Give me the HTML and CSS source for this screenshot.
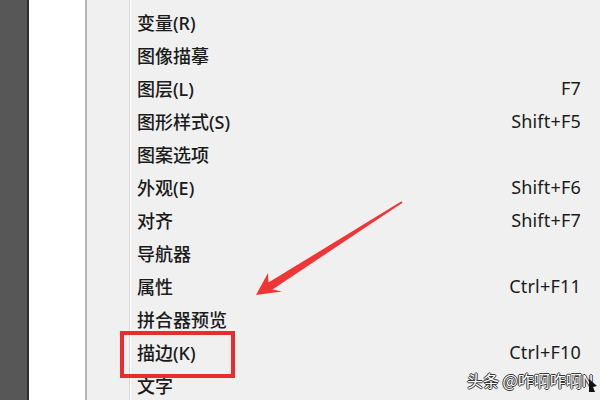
FILE: index.html
```
<!DOCTYPE html>
<html lang="zh-CN">

<head>
    <meta charset="UTF-8">
    <meta name="viewport" content="width=device-width, initial-scale=1.0">
    <title>窗口菜单</title>
    <link rel="stylesheet" href="styles.css">
</head>

<body>
    <div class="screen">
        <!-- Left tool strip and document edge -->
        <div class="tool-strip"></div>
        <div class="doc-edge"></div>

        <!-- Dropdown menu -->
        <div class="menu">
            <div class="gutter"></div>
            <ul class="menu-list">
                <li class="menu-item"><span>变量(R)</span><span class="key"></span></li>
                <li class="menu-item"><span>图像描摹</span><span class="key"></span></li>
                <li class="menu-item"><span>图层(L)</span><span class="key">F7</span></li>
                <li class="menu-item"><span>图形样式(S)</span><span class="key">Shift+F5</span></li>
                <li class="menu-item"><span>图案选项</span><span class="key"></span></li>
                <li class="menu-item"><span>外观(E)</span><span class="key">Shift+F6</span></li>
                <li class="menu-item"><span>对齐</span><span class="key">Shift+F7</span></li>
                <li class="menu-item"><span>导航器</span><span class="key"></span></li>
                <li class="menu-item"><span>属性</span><span class="key">Ctrl+F11</span></li>
                <li class="menu-item"><span>拼合器预览</span><span class="key"></span></li>
                <li class="menu-item"><span>描边(K)</span><span class="key">Ctrl+F10</span></li>
                <li class="menu-item"><span>文字</span><span class="key"></span></li>
            </ul>
        </div>

        <!-- Annotations drawn over the screenshot -->
        <div class="highlight-box"></div>
        <svg class="pointer-arrow" width="600" height="400" viewBox="0 0 600 400">
            <polygon points="256,295 268,273 268.5,282.5 401.5,201.3 402.5,202.7 272.5,289.5 282,291.5" fill="#ef3535" />
        </svg>

        <div class="watermark">头条 @咋啊咋啊N</div>
        <svg class="cursor" width="10" height="16" viewBox="0 0 10 16">
            <polygon points="1,1 9,8 5,9 7,14 1,14" fill="#111" />
        </svg>
    </div>
</body>

</html>
```

FILE: styles.css
```
/* Page frame */
body, html {
    margin: 0;
    padding: 0;
    width: 600px;
    height: 400px;
    overflow: hidden;
}

body {
    font-family: 'Noto Sans', 'Noto Sans CJK SC', sans-serif;
}

.screen {
    position: relative;
    display: flex;
    width: 600px;
    height: 400px;
    background-color: #f0f0f0;
}

/* Left side of the window */
.tool-strip {
    width: 27px;
    background-color: #575757;
    border-right: 2px solid #2e2e2e;
}

.doc-edge {
    width: 56px;
    background-color: #ffffff;
    border-right: 2px solid #b4b4b4;
}

/* Menu */
.menu {
    flex: 1;
    display: flex;
    background-color: #f0f0f0;
}

.gutter {
    width: 42px;
    border-right: 1px solid #d9d9d9;
    box-shadow: 1px 0 0 #ffffff;
}

.menu-list {
    list-style: none;
    margin: 0;
    padding: 5px 19px 0 7px;
    flex: 1;
}

.menu-item {
    display: flex;
    justify-content: space-between;
    align-items: center;
    height: 33px;
    font-size: 18px;
    font-weight: 500;
    color: #1a1a1a;
}

.key {
    font-size: 18px;
    font-weight: 400;
    letter-spacing: 0.2px;
}

/* Red annotation */
.highlight-box {
    position: absolute;
    left: 120px;
    top: 331px;
    width: 107px;
    height: 39px;
    border: 4px solid #ea2b30;
}

.pointer-arrow {
    position: absolute;
    left: 0;
    top: 0;
    filter: blur(0.5px);
}

/* Watermark */
.watermark {
    position: absolute;
    left: 467px;
    top: 368px;
    font-family: 'Noto Sans CJK SC', sans-serif;
    font-size: 16px;
    color: #ffffff;
    text-shadow: 1px 0 0 #333, -1px 0 0 #333, 0 1px 0 #333, 0 -1px 0 #333;
}

.cursor {
    position: absolute;
    left: 588px;
    top: 378px;
}
```
